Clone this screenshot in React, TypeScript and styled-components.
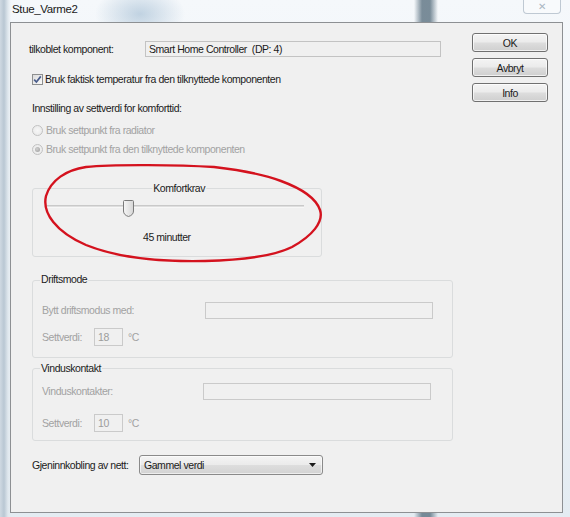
import React from "react";
import styled, { createGlobalStyle } from "styled-components";

const Global = createGlobalStyle`
  html, body { margin: 0; padding: 0; }
  body {
    font-family: "Liberation Sans", Arial, sans-serif;
    font-size: 10.5px;
    letter-spacing: -0.45px;
    color: #1b1b1b;
  }
  * { box-sizing: border-box; }
`;

const Window = styled.div`
  position: relative;
  width: 570px;
  height: 517px;
  overflow: hidden;
  display: flex;
  flex-direction: column;
  background:
    radial-gradient(ellipse 45px 28px at 140px 14px, rgba(150, 180, 205, 0.55), rgba(150, 180, 205, 0) 100%),
    linear-gradient(90deg, rgba(0,0,0,0) 414px, rgba(80, 104, 120, 0.75) 422px, rgba(80, 104, 120, 0.75) 430px, rgba(0,0,0,0) 438px),
    linear-gradient(90deg, #cfd9e2 0, #b9c7d3 4px, #e0e8ee 8px, rgba(0,0,0,0) 11px),
    linear-gradient(180deg, #f5f8fb 0, #e4ecf2 100%);
`;

const TitleBar = styled.div`
  height: 22px;
  display: flex;
  justify-content: space-between;
  align-items: flex-start;
  padding-left: 12px;
`;

const Title = styled.div`
  font-size: 11.5px;
  letter-spacing: -0.35px;
  line-height: 14px;
  margin-top: 2px;
  color: #1a1a1a;
`;

const CloseBtn = styled.div`
  width: 38px;
  height: 14px;
  margin-right: 9px;
  border: 1px solid rgba(120, 140, 160, 0.45);
  border-top: none;
  border-radius: 0 0 4px 4px;
  background: rgba(255, 255, 255, 0.35);
  display: flex;
  align-items: center;
  justify-content: center;
  color: #a9b6c2;
  font-size: 10px;
  line-height: 10px;
  letter-spacing: 0;
`;

const Client = styled.div`
  margin-left: 10px;
  width: 553px;
  height: 491px;
  border: 1px solid #8d9093;
  background: #f0f0f0;
  display: flex;
`;

const Main = styled.div`
  width: 442px;
  padding: 18px 0 0 21px;
  display: flex;
  flex-direction: column;
`;

const ButtonColumn = styled.div`
  width: 76px;
  margin-left: 19px;
  padding-top: 10px;
  display: flex;
  flex-direction: column;
  gap: 6px;
`;

const WinButton = styled.button`
  height: 19px;
  width: 76px;
  padding: 0;
  border: 1px solid #707070;
  border-radius: 3px;
  background: linear-gradient(180deg, #f4f4f4 0%, #ebebeb 48%, #dddddd 52%, #cfcfcf 100%);
  box-shadow: inset 0 0 0 1px rgba(255, 255, 255, 0.7);
  font: inherit;
  letter-spacing: inherit;
  color: #1b1b1b;
`;

const Row = styled.div<{ $mt?: number; $h: number; $ml?: number }>`
  display: flex;
  align-items: center;
  height: ${(p) => p.$h}px;
  margin-top: ${(p) => p.$mt ?? 0}px;
  margin-left: ${(p) => p.$ml ?? 0}px;
  white-space: pre;
`;

const Label = styled.span<{ $w?: number; $disabled?: boolean }>`
  display: inline-block;
  width: ${(p) => (p.$w ? `${p.$w}px` : "auto")};
  flex-shrink: 0;
  color: ${(p) => (p.$disabled ? "#a2a2a2" : "#1b1b1b")};
  line-height: 13px;
`;

const Field = styled.div<{ $w: number; $h: number; $disabled?: boolean }>`
  width: ${(p) => p.$w}px;
  height: ${(p) => p.$h}px;
  border: 1px solid ${(p) => (p.$disabled ? "#cacaca" : "#c3c3c3")};
  background: #f0f0f0;
  padding-left: 3px;
  display: flex;
  align-items: center;
  color: ${(p) => (p.$disabled ? "#9c9c9c" : "#1b1b1b")};
  white-space: pre;
  flex-shrink: 0;
`;

const Unit = styled.span`
  margin-left: 5px;
  color: #a2a2a2;
`;

const CheckBox = styled.span`
  width: 11px;
  height: 11px;
  border: 1px solid #8e8f8f;
  background: linear-gradient(135deg, #dcdcdc 0%, #fafafa 100%);
  display: inline-flex;
  align-items: center;
  justify-content: center;
  margin-right: 2px;
  flex-shrink: 0;
`;

const Radio = styled.span<{ $checked?: boolean }>`
  width: 11px;
  height: 11px;
  border-radius: 50%;
  border: 1px solid #c2c2c2;
  background: radial-gradient(circle at 50% 50%, #f7f7f7 0%, #e6e6e6 100%);
  display: inline-flex;
  align-items: center;
  justify-content: center;
  margin-right: 3px;
  flex-shrink: 0;
  &::after {
    content: "";
    display: ${(p) => (p.$checked ? "block" : "none")};
    width: 5px;
    height: 5px;
    border-radius: 50%;
    background: radial-gradient(circle at 40% 40%, #d0d0d0, #9a9a9a);
  }
`;

const Group = styled.div<{ $mt: number; $w: number; $h: number }>`
  position: relative;
  margin-top: ${(p) => p.$mt}px;
  width: ${(p) => p.$w}px;
  height: ${(p) => p.$h}px;
  border: 1px solid #dadcdd;
  border-radius: 3px;
  display: flex;
  flex-direction: column;
`;

const Legend = styled.span<{ $top: number; $center?: boolean }>`
  position: absolute;
  top: ${(p) => p.$top}px;
  left: ${(p) => (p.$center ? "50%" : "7px")};
  transform: ${(p) => (p.$center ? "translateX(-46%)" : "none")};
  background: #f0f0f0;
  padding: 0 1px;
  line-height: 13px;
  color: #1b1b1b;
`;

const GroupBody = styled.div<{ $pt: number; $gap: number }>`
  padding: ${(p) => p.$pt}px 0 0 9px;
  display: flex;
  flex-direction: column;
  gap: ${(p) => p.$gap}px;
`;

const Track = styled.div`
  position: relative;
  margin: 16px 0 0 14px;
  width: 257px;
  height: 3px;
  border-top: 1px solid #c9c9c9;
  background: #dedede;
  border-bottom: 1px solid #f7f7f7;
`;

const Thumb = styled.svg`
  position: absolute;
  left: 76px;
  top: -6px;
`;

const SliderValue = styled.div`
  margin: 22px 0 0 110px;
  line-height: 14px;
`;

const Combo = styled.div`
  width: 184px;
  height: 20px;
  border: 1px solid #8a8a8a;
  border-radius: 3px;
  background: linear-gradient(180deg, #f4f4f4 0%, #ebebeb 48%, #dddddd 52%, #d3d3d3 100%);
  box-shadow: inset 0 0 0 1px rgba(255, 255, 255, 0.6);
  display: flex;
  align-items: center;
  justify-content: space-between;
  padding: 0 6px 0 4px;
  color: #1b1b1b;
`;

const Annotation = styled.svg`
  position: absolute;
  left: 0;
  top: 0;
  pointer-events: none;
`;

export default function App() {
  return (
    <>
      <Global />
      <Window>
        <TitleBar>
          <Title>Stue_Varme2</Title>
          <CloseBtn>✕</CloseBtn>
        </TitleBar>
        <Client>
          <Main>
            <Row $h={16} $ml={-3}>
              <Label $w={116}>tilkoblet komponent:</Label>
              <Field $w={296} $h={16}>Smart Home Controller  (DP: 4)</Field>
            </Row>
            <Row $h={13} $mt={16}>
              <CheckBox>
                <svg width="9" height="9" viewBox="0 0 9 9">
                  <path d="M1.2 4.6 L3.4 7 L7.8 1.4" fill="none" stroke="#4a5d8c" strokeWidth="1.7" />
                </svg>
              </CheckBox>
              <Label>Bruk faktisk temperatur fra den tilknyttede komponenten</Label>
            </Row>
            <Row $h={14} $mt={15}>
              <Label>Innstilling av settverdi for komforttid:</Label>
            </Row>
            <Row $h={14} $mt={8}>
              <Radio />
              <Label $disabled>Bruk settpunkt fra radiator</Label>
            </Row>
            <Row $h={14} $mt={5}>
              <Radio $checked />
              <Label $disabled>Bruk settpunkt fra den tilknyttede komponenten</Label>
            </Row>

            <Group $mt={32} $w={290} $h={69}>
              <Legend $top={-7} $center>Komfortkrav</Legend>
              <Track>
                <Thumb width="11" height="17" viewBox="0 0 11 17">
                  <defs>
                    <linearGradient id="thumbg" x1="0" y1="0" x2="1" y2="0">
                      <stop offset="0" stopColor="#f6f6f6" />
                      <stop offset="1" stopColor="#d6d6d6" />
                    </linearGradient>
                  </defs>
                  <path
                    d="M1.5 0.5 H9.5 A1 1 0 0 1 10.5 1.5 V11 Q10.5 15 5.5 16.5 Q0.5 15 0.5 11 V1.5 A1 1 0 0 1 1.5 0.5 Z"
                    fill="url(#thumbg)"
                    stroke="#7a7a7a"
                  />
                </Thumb>
              </Track>
              <SliderValue>45 minutter</SliderValue>
            </Group>

            <Group $mt={23} $w={421} $h={78}>
              <Legend $top={-8}>Driftsmode</Legend>
              <GroupBody $pt={21} $gap={9}>
                <Row $h={17}>
                  <Label $w={163} $disabled>Bytt driftsmodus med:</Label>
                  <Field $w={228} $h={17} $disabled />
                </Row>
                <Row $h={18}>
                  <Label $w={52} $disabled>Settverdi:</Label>
                  <Field $w={29} $h={18} $disabled>18</Field>
                  <Unit>°C</Unit>
                </Row>
              </GroupBody>
            </Group>

            <Group $mt={10} $w={421} $h={73}>
              <Legend $top={-7}>Vinduskontakt</Legend>
              <GroupBody $pt={14} $gap={14}>
                <Row $h={17}>
                  <Label $w={161} $disabled>Vinduskontakter:</Label>
                  <Field $w={228} $h={17} $disabled />
                </Row>
                <Row $h={18}>
                  <Label $w={52} $disabled>Settverdi:</Label>
                  <Field $w={29} $h={18} $disabled>10</Field>
                  <Unit>°C</Unit>
                </Row>
              </GroupBody>
            </Group>

            <Row $h={20} $mt={14}>
              <Label $w={107}>Gjeninnkobling av nett:</Label>
              <Combo>
                <span>Gammel verdi</span>
                <svg width="7" height="4" viewBox="0 0 7 4">
                  <path d="M0 0 H7 L3.5 4 Z" fill="#1b1b1b" />
                </svg>
              </Combo>
            </Row>
          </Main>
          <ButtonColumn>
            <WinButton>OK</WinButton>
            <WinButton>Avbryt</WinButton>
            <WinButton>Info</WinButton>
          </ButtonColumn>
        </Client>
        <Annotation width="570" height="517" viewBox="0 0 570 517">
          <path
            d="M214 167 C180 165 115 164 86 167 C66 170 51 180 46 196 C42 213 56 232 86 245 C116 257 160 262 205 261 C246 260 274 256 292 247 C312 236 324 222 320 210 C316 198 300 188 281 181 C262 174 240 170 214 167 Z"
            fill="none"
            stroke="#d4121e"
            strokeWidth="2.4"
            strokeLinejoin="round"
          />
        </Annotation>
      </Window>
    </>
  );
}
